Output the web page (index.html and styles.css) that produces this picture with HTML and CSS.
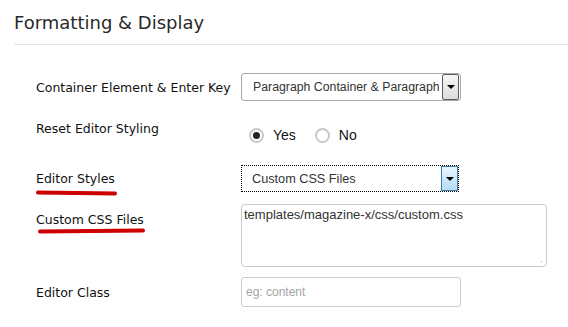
FILE: index.html
```html
<!DOCTYPE html>
<html lang="en">
<head>
  <meta charset="UTF-8">
  <title>Formatting &amp; Display</title>
  <link rel="stylesheet" href="styles.css">
</head>
<body>

  <h2 class="section-title">Formatting &amp; Display</h2>

  <div class="form">
    <!-- Container element -->
    <div class="row row-select">
      <label class="label">Container Element &amp; Enter Key</label>
      <div class="select">
        <span class="select-text">Paragraph Container &amp; Paragraph</span>
        <span class="select-btn"><i class="arrow"></i></span>
      </div>
    </div>

    <!-- Reset styling -->
    <div class="row row-radio">
      <label class="label">Reset Editor Styling</label>
      <div class="radios">
        <span class="radio checked"></span><span class="radio-label">Yes</span>
        <span class="radio"></span><span class="radio-label">No</span>
      </div>
    </div>

    <!-- Editor styles -->
    <div class="row row-select2">
      <label class="label marked mark-1">Editor Styles</label>
      <div class="select focused">
        <span class="select-text">Custom CSS Files</span>
        <span class="select-btn blue"><i class="arrow"></i></span>
      </div>
    </div>

    <!-- Custom css -->
    <div class="row row-area">
      <label class="label marked mark-2">Custom CSS Files</label>
      <div class="textarea">templates/magazine-x/css/custom.css<span class="grip"></span></div>
    </div>

    <!-- Editor class -->
    <div class="row row-input">
      <label class="label">Editor Class</label>
      <div class="input">eg: content</div>
    </div>
  </div>

</body>
</html>
```
FILE: styles.css
```css
* { box-sizing: border-box; }

body {
  margin: 0;
  background: #fff;
  font-family: "DejaVu Sans", Verdana, sans-serif;
  color: #222;
  width: 568px;
  height: 327px;
  overflow: hidden;
}

.section-title {
  margin: 0 0 0 14px;
  padding: 12px 0 11px;
  font-size: 18px;
  font-weight: normal;
  color: #2a2a2a;
  border-bottom: 1px solid #e2e2e2;
}

/* Form rows */
.form {
  padding: 28px 0 0 36px;
}

.row {
  display: grid;
  grid-template-columns: 205px auto;
  align-items: center;
}

.label {
  font-size: 12.5px;
  color: #111;
  position: relative;
}

.row-radio { align-items: start; margin-top: 20px; }
.row-select2 { margin-top: 22px; }
.row-area { align-items: start; margin-top: 12px; }
.row-area .label { padding-top: 8px; }
.row-input { margin-top: 10px; }

/* red hand drawn marks */
.marked::after {
  content: "";
  position: absolute;
  height: 4px;
  background: #cc0000;
  border-radius: 3px;
}

.mark-1::after { left: 0; width: 81px; top: 20px; transform: rotate(0.6deg); }
.mark-2::after { left: 2px; width: 107px; top: 25px; transform: rotate(-0.6deg); }

/* fake select */
.select {
  width: 220px;
  height: 28px;
  border: 1px solid #a9a9a9;
  border-radius: 3px;
  display: flex;
  align-items: center;
  font-family: "Liberation Sans", Arial, sans-serif;
  font-size: 12.3px;
  color: #333;
  padding-left: 11px;
}

.select-text {
  flex: 1;
  white-space: nowrap;
  overflow: hidden;
}

.select-btn {
  flex: none;
  width: 17px;
  height: 26px;
  margin: 0 1px 0 3px;
  border: 1px solid #5a5a5a;
  border-radius: 2px;
  background: linear-gradient(#f6f6f6, #dcdcdc);
  display: flex;
  align-items: center;
  justify-content: center;
}

.arrow {
  width: 0;
  height: 0;
  border-left: 4px solid transparent;
  border-right: 4px solid transparent;
  border-top: 4px solid #000;
}

.select.focused {
  width: 218px;
  height: 27px;
  border: 1px dotted #000;
  border-radius: 0;
  padding-left: 10px;
  font-size: 12.7px;
}

.select-btn.blue {
  height: 25px;
  margin-right: 0;
  border: 1px solid #3c7fb1;
  border-radius: 0;
  background: linear-gradient(#eaf5fd, #b6dcf6);
}

/* radios */
.radios {
  display: flex;
  align-items: center;
  margin-left: 8px;
  margin-top: -1px;
  padding-top: 7px;
  font-family: "Liberation Sans", Arial, sans-serif;
  font-size: 14px;
}

.radio {
  width: 15px;
  height: 15px;
  border: 2px solid #c8c8c8;
  border-radius: 50%;
  background: #fff;
  display: flex;
  align-items: center;
  justify-content: center;
}

.radio.checked::after {
  content: "";
  width: 7px;
  height: 7px;
  border-radius: 50%;
  background: #222;
}

.radio-label { margin: 0 19px 0 9px; color: #111; }

/* textarea */
.textarea {
  position: relative;
  width: 306px;
  height: 63px;
  border: 1px solid #c9c9c9;
  border-radius: 4px;
  font-family: "Liberation Sans", Arial, sans-serif;
  font-size: 13px;
  color: #333;
  padding: 2px 0 0 2px;
}

.grip {
  position: absolute;
  right: 2px;
  bottom: 2px;
  width: 7px;
  height: 7px;
  background:
    radial-gradient(circle, #aaa 0.8px, transparent 1px) 0 0 / 3px 3px;
  clip-path: polygon(100% 0, 100% 100%, 0 100%);
}

/* input */
.input {
  width: 220px;
  height: 30px;
  border: 1px solid #ccc;
  border-radius: 3px;
  font-family: "Liberation Sans", Arial, sans-serif;
  font-size: 12px;
  color: #a4a4a4;
  padding: 7px 0 0 4px;
}
```
